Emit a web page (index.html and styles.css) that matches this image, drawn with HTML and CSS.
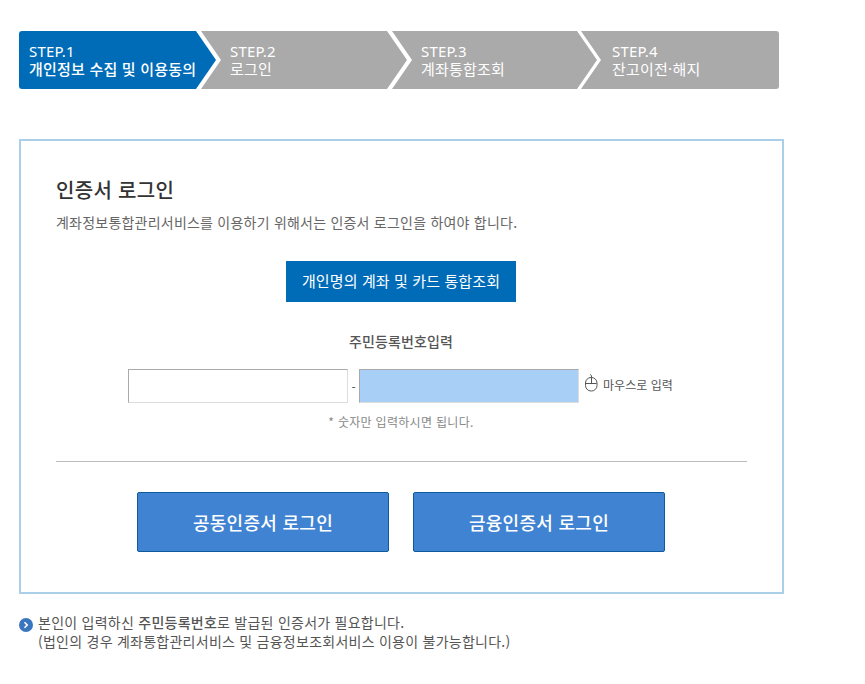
FILE: index.html
```html
<!DOCTYPE html>
<html lang="ko">
<head>
<meta charset="utf-8">
<title>인증서 로그인</title>
<link rel="stylesheet" href="styles.css">
</head>
<body>
<ol class="steps">
  <li class="step step-first"><span class="step-no">STEP.1</span><span class="step-name">개인정보 수집 및 이용동의</span></li>
  <li class="step step-second"><span class="step-no">STEP.2</span><span class="step-label">로그인</span></li>
  <li class="step step-third"><span class="step-no">STEP.3</span><span class="step-label">계좌통합조회</span></li>
  <li class="step step-last"><span class="step-no">STEP.4</span><span class="step-label">잔고이전·해지</span></li>
</ol>

<section class="panel">
  <h1 class="title">인증서 로그인</h1>
  <p class="desc">계좌정보통합관리서비스를 이용하기 위해서는 인증서 로그인을 하여야 합니다.</p>
  <div class="center"><button class="btn-card" type="button">개인명의 계좌 및 카드 통합조회</button></div>
  <p class="label">주민등록번호입력</p>
  <div class="id-row">
    <input class="id-input" type="text" aria-label="주민등록번호 앞자리">
    <span class="dash">-</span>
    <input class="id-input id-back" type="text" aria-label="주민등록번호 뒷자리">
    <span class="mouse">
      <svg class="mouse-icon" width="13" height="18" viewBox="0 0 13 18" aria-hidden="true">
        <path d="M6.5 3.5V2C6.5 1.2 5.8 0.8 5 0.5" fill="none" stroke="#555" stroke-width="1"/>
        <rect x="0.5" y="3.5" width="11.5" height="13.5" rx="5.5" fill="none" stroke="#555" stroke-width="1"/>
        <path d="M1 9.5H11.5M6.5 3.5V9.5" fill="none" stroke="#555" stroke-width="1"/>
      </svg>
      마우스로 입력
    </span>
  </div>
  <p class="hint">* 숫자만 입력하시면 됩니다.</p>
  <hr class="divider">
  <div class="login-row">
    <button class="btn-login" type="button">공동인증서 로그인</button>
    <button class="btn-login" type="button">금융인증서 로그인</button>
  </div>
</section>

<div class="note">
  <svg class="note-icon" width="14" height="14" viewBox="0 0 14 14" aria-hidden="true">
    <circle cx="7" cy="7" r="7" fill="#3a76c0"/>
    <path d="M5.5 4.3L8.2 7L5.5 9.7" fill="none" stroke="#fff" stroke-width="1.6"/>
  </svg>
  <p class="note-text">본인이 입력하신 <strong class="note-strong">주민등록번호</strong>로 발급된 인증서가 필요합니다.<br>(법인의 경우 계좌통합관리서비스 및 금융정보조회서비스 이용이 불가능합니다.)</p>
</div>
</body>
</html>
```

FILE: styles.css
```css
* { box-sizing: border-box; }
html, body { margin: 0; padding: 0; }
body {
  background: #fff;
  color: #444;
  font-family: "Noto Sans CJK KR", "Noto Sans", sans-serif;
  padding: 31px 0 0 19px;
  width: 865px;
  height: 684px;
  overflow: hidden;
}
p, h1, ol { margin: 0; padding: 0; }

.steps {
  display: flex;
  list-style: none;
  width: 760px;
  height: 58px;
  border-radius: 3px;
  overflow: hidden;
}
.step {
  display: flex;
  flex-direction: column;
  justify-content: center;
  height: 58px;
  background: #aaa;
  color: #fff;
  font-size: 15px;
  line-height: 17px;
  flex: none;
  clip-path: polygon(0 0, calc(100% - 20px) 0, 100% 50%, calc(100% - 20px) 100%, 0 100%, 20px 50%);
  padding-left: 29px;
  margin-left: -15px;
}
.step-no { font-family: "Noto Sans", sans-serif; font-size: 15px; letter-spacing: 0.2px; }
.step-label { letter-spacing: 0.2px; white-space: nowrap; }
.step-first {
  width: 197px;
  margin-left: 0;
  padding-left: 10px;
  background: #006cb7;
  clip-path: polygon(0 0, calc(100% - 20px) 0, 100% 50%, calc(100% - 20px) 100%, 0 100%);
}
.step-name { font-weight: 500; letter-spacing: 0.2px; white-space: nowrap; }
.step-second { width: 206px; }
.step-third { width: 205px; }
.step-last {
  width: 198px;
  margin-left: -16px;
  padding-left: 31px;
  clip-path: polygon(0 0, 100% 0, 100% 100%, 0 100%, 20px 50%);
}

.panel {
  width: 765px;
  height: 455px;
  margin-top: 50px;
  border: 2px solid #a9cfe9;
  padding: 34px 36px 0 35px;
}
.title {
  font-size: 20px;
  font-weight: 500;
  line-height: 30px;
  letter-spacing: 0.3px;
  color: #333;
}
.desc {
  font-size: 14px;
  line-height: 19px;
  margin-top: 8px;
  letter-spacing: 0.22px;
  color: #666;
}
.center { display: flex; justify-content: center; margin-top: 29px; }
.btn-card {
  width: 230px;
  height: 41px;
  border: 0;
  padding: 0 0 2px;
  background: #006cb7;
  color: #fff;
  font: 400 15px "Noto Sans CJK KR", sans-serif;
  letter-spacing: 0.12px;
}
.label {
  text-align: center;
  font-size: 14px;
  font-weight: 500;
  line-height: 19px;
  margin-top: 30px;
  letter-spacing: 0.1px;
  color: #555;
}
.id-row {
  display: flex;
  align-items: center;
  justify-content: center;
  margin-top: 18px;
  height: 34px;
}
.id-input {
  width: 220px;
  height: 34px;
  border: 1px solid;
  border-color: #aaa #ddd #ddd #aaa;
  background: #fff;
  padding: 0;
}
.id-back { background: #a8cff5; }
.dash { width: 11px; text-align: center; font-size: 12px; color: #555; }
.mouse {
  display: flex;
  align-items: center;
  gap: 5px;
  width: 95px;
  margin-top: -2px;
  padding-left: 6px;
  font-size: 12px;
  line-height: 14px;
  letter-spacing: 0.05px;
  color: #555;
  white-space: nowrap;
}
.mouse-icon { margin-top: -5px; flex: none; }
.hint {
  text-align: center;
  font-size: 12px;
  line-height: 18px;
  margin-top: 10px;
  letter-spacing: 0.3px;
  color: #888;
}
.divider {
  border: 0;
  border-top: 1px solid #bbb;
  margin: 30px -1px 0 0;
}
.login-row {
  display: flex;
  justify-content: center;
  gap: 24px;
  margin-top: 30px;
}
.btn-login {
  width: 252px;
  height: 60px;
  border: 1px solid #0e5b9c;
  border-radius: 2px;
  padding: 0;
  background: #4083d2;
  color: #fff;
  font: 500 18px "Noto Sans CJK KR", sans-serif;
  letter-spacing: 0.3px;
}

.note {
  display: flex;
  gap: 5px;
  margin-top: 19px;
}
.note-icon { flex: none; margin-top: 5px; }
.note-text {
  font-size: 14px;
  line-height: 19px;
  letter-spacing: 0.25px;
  color: #555;
}
.note-strong { font-weight: 500; }
```
